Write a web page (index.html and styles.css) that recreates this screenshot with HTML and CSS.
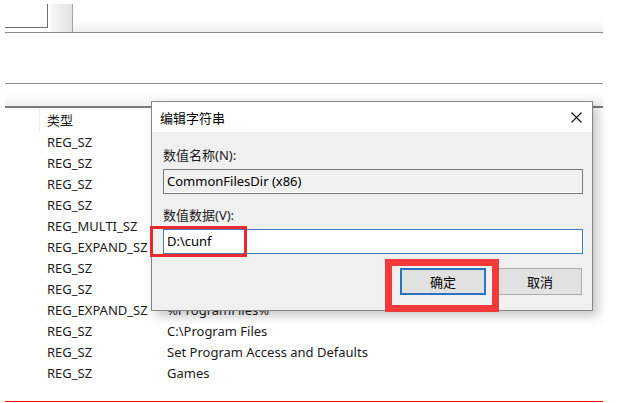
FILE: index.html
```html
<!DOCTYPE html>
<html>
<head>
    <title>编辑字符串</title>
    <link rel="stylesheet" href="styles.css">
</head>
<body>
    <div class="page">
        <div class="topbar">
            <div class="pane"></div>
            <div class="splitter"></div>
            <div class="toolbar"></div>
        </div>
        <div class="address"></div>
        <div class="gap"></div>

        <div class="list">
            <div class="row head">
                <div class="cell sep"></div>
                <div class="cell type">类型</div>
                <div class="cell data"></div>
            </div>
            <div class="row"><div class="cell sep"></div><div class="cell type">REG_SZ</div><div class="cell data"></div></div>
            <div class="row"><div class="cell sep"></div><div class="cell type">REG_SZ</div><div class="cell data"></div></div>
            <div class="row"><div class="cell sep"></div><div class="cell type">REG_SZ</div><div class="cell data"></div></div>
            <div class="row"><div class="cell sep"></div><div class="cell type">REG_SZ</div><div class="cell data"></div></div>
            <div class="row"><div class="cell sep"></div><div class="cell type">REG_MULTI_SZ</div><div class="cell data"></div></div>
            <div class="row"><div class="cell sep"></div><div class="cell type">REG_EXPAND_SZ</div><div class="cell data"></div></div>
            <div class="row"><div class="cell sep"></div><div class="cell type">REG_SZ</div><div class="cell data"></div></div>
            <div class="row"><div class="cell sep"></div><div class="cell type">REG_SZ</div><div class="cell data"></div></div>
            <div class="row"><div class="cell sep"></div><div class="cell type">REG_EXPAND_SZ</div><div class="cell data">%ProgramFiles%</div></div>
            <div class="row"><div class="cell sep"></div><div class="cell type">REG_SZ</div><div class="cell data">C:\Program Files</div></div>
            <div class="row"><div class="cell sep"></div><div class="cell type">REG_SZ</div><div class="cell data">Set Program Access and Defaults</div></div>
            <div class="row"><div class="cell sep"></div><div class="cell type">REG_SZ</div><div class="cell data">Games</div></div>
        </div>

        <div class="redline"></div>
    </div>

    <div class="dialog">
        <div class="titlebar">
            <span class="title">编辑字符串</span>
            <svg class="close" width="11" height="11" viewBox="0 0 11 11">
                <path d="M0.5 0.5 L10.5 10.5 M10.5 0.5 L0.5 10.5" stroke="#111" stroke-width="1.1" fill="none"/>
            </svg>
        </div>
        <div class="dialog-body">
            <div class="field-label">数值名称(N):</div>
            <div class="field readonly">CommonFilesDir (x86)</div>
            <div class="field-label">数值数据(V):</div>
            <div class="field active">D:\cunf</div>
            <div class="btns">
                <button class="btn primary">确定</button>
                <button class="btn">取消</button>
            </div>
        </div>
        <div class="mark mark-input"></div>
        <div class="mark mark-ok"></div>
    </div>
</body>
</html>
```

FILE: styles.css
```css
body {
    margin: 0;
    width: 627px;
    height: 403px;
    overflow: hidden;
    background: #fff;
    font-family: "Noto Sans", "Noto Sans CJK SC", sans-serif;
    font-size: 13px;
    color: #1a1a1a;
    position: relative;
}

.page {
    margin-left: 5px;
    width: 598px;
}

.topbar {
    display: flex;
    height: 32px;
    border-bottom: 1px solid #8c8c8c;
}

.pane {
    width: 42px;
    height: 23px;
    margin-top: 4px;
    border-right: 1px solid #6e6e6e;
    border-bottom: 1px solid #6e6e6e;
}

.splitter {
    width: 22px;
    margin-left: 2px;
    margin-top: 4px;
    background: linear-gradient(to right, #fafafa, #ececec 50%, #e2e2e2);
    border-right: 1px solid #a5a5a5;
}

.toolbar {
    flex: 1;
    margin-top: 4px;
    background: linear-gradient(to bottom, #fff 60%, #eeeeee);
}

.address {
    height: 50px;
    border-bottom: 1px solid #8c8c8c;
}

.gap {
    height: 22px;
    background: linear-gradient(to bottom, #fff 40%, #f2f2f2);
}

.list {
    border-top: 2px solid #7b7b7b;
}

.row {
    display: grid;
    grid-template-columns: 35px 120px 1fr;
    height: 21px;
    line-height: 21px;
}

.row.head {
    height: 24px;
    line-height: 24px;
}

.head .sep {
    border-right: 1px solid #ececec;
}

.cell.type {
    padding-left: 7px;
    white-space: nowrap;
}

.cell.data {
    padding-left: 7px;
    white-space: nowrap;
}

.redline {
    margin-top: 17px;
    height: 1px;
    background: #ff1010;
}

.dialog {
    position: absolute;
    left: 151px;
    top: 101px;
    width: 440px;
    height: 208px;
    border: 1px solid #858585;
    background: #f0f0f0;
    box-shadow: 5px 5px 10px rgba(0, 0, 0, 0.22);
}

.titlebar {
    display: flex;
    align-items: center;
    justify-content: space-between;
    height: 30px;
    padding: 0 9px 0 8px;
    background: #fff;
}

.title {
    color: #000;
}

.close {
    margin-right: 1px;
}

.dialog-body {
    padding: 14px 9px 0 11px;
}

.field-label {
    height: 18px;
    line-height: 18px;
    margin-bottom: 5px;
}

.field {
    box-sizing: border-box;
    height: 25px;
    line-height: 23px;
    padding-left: 3px;
    margin-bottom: 12px;
    border: 1px solid #7a7a7a;
    color: #000;
}

.field.readonly {
    background: #f0f0f0;
    box-shadow: inset 0 -1px 0 #fff;
}

.field.active {
    background: #fff;
    border-color: #3d7fc0;
    margin-bottom: 14px;
}

.btns {
    display: flex;
    justify-content: flex-end;
    gap: 12px;
    padding-right: 1px;
}

.btn {
    box-sizing: border-box;
    width: 84px;
    height: 27px;
    font: inherit;
    color: #000;
    background: #e1e1e1;
    border: 1px solid #adadad;
    padding: 0;
}

.btn.primary {
    width: 86px;
    border: 2px solid #2a73c3;
}

.mark {
    position: absolute;
    border: 3px solid #ea2a2d;
}

.mark-input {
    left: -2px;
    top: 124px;
    width: 91px;
    height: 25px;
}

.mark-ok {
    left: 233px;
    top: 157px;
    width: 100px;
    height: 39px;
    border: 7px solid #f23a3a;
}
```
